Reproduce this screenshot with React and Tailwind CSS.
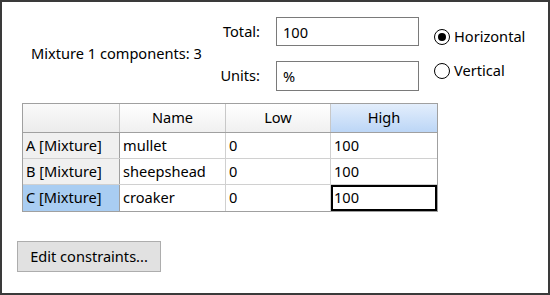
import { useState } from "react";

const rows = [
  { id: "A", name: "mullet", low: "0", high: "100" },
  { id: "B", name: "sheepshead", low: "0", high: "100" },
  { id: "C", name: "croaker", low: "0", high: "100" },
];

const App = () => {
  const [orientation, setOrientation] = useState("horizontal");

  return (
    <div
      className="w-[550px] h-[295px] bg-white border-2 border-[#3a3a3a] text-[14.6px] text-black overflow-hidden"
      style={{ fontFamily: '"Noto Sans", "Open Sans", sans-serif' }}
    >
      {/* Top controls */}
      <div className="flex pt-[15px]">
        <div className="w-[205px] pl-[29px] flex items-center">
          <span>Mixture 1 components: 3</span>
        </div>
        <div className="flex flex-col gap-[15px]">
          <div className="flex items-center">
            <span className="w-[53px] text-right">Total:</span>
            <input
              className="ml-[16px] w-[143px] h-[29px] border border-[#7a7a7a] px-[6px] outline-none"
              defaultValue="100"
            />
          </div>
          <div className="flex items-center">
            <span className="w-[53px] text-right">Units:</span>
            <input
              className="ml-[16px] w-[143px] h-[30px] border border-[#7a7a7a] px-[6px] outline-none"
              defaultValue="%"
            />
          </div>
        </div>
        <div className="flex flex-col gap-[12px] ml-[15px] pt-[9px]">
          {[
            { id: "horizontal", label: "Horizontal" },
            { id: "vertical", label: "Vertical" },
          ].map((opt) => (
            <label
              key={opt.id}
              className="flex items-center gap-[4px] h-[22px] cursor-pointer"
              onClick={() => setOrientation(opt.id)}
            >
              <span className="w-[16px] h-[16px] rounded-full border-[1.5px] border-black flex items-center justify-center">
                {orientation === opt.id && (
                  <span className="w-[8px] h-[8px] rounded-full bg-black" />
                )}
              </span>
              <span>{opt.label}</span>
            </label>
          ))}
        </div>
      </div>

      {/* Grid */}
      <div className="ml-[20px] mt-[12px] w-[416px] border border-[#a0a0a0]">
        <div className="flex h-[29px] border-b border-[#a0a0a0]">
          <div className="w-[97px] bg-gradient-to-b from-[#fafafa] to-[#ececec] border-r border-[#c8c8c8]" />
          <div className="w-[106px] flex items-center justify-center bg-gradient-to-b from-white to-[#f0f0f0] border-r border-[#c8c8c8]">
            Name
          </div>
          <div className="w-[105px] flex items-center justify-center bg-gradient-to-b from-white to-[#f0f0f0] border-r border-[#c8c8c8]">
            Low
          </div>
          <div className="flex-1 flex items-center justify-center bg-gradient-to-b from-[#e3eefc] to-[#bcd6f6]">
            High
          </div>
        </div>
        {rows.map((r, i) => {
          const selected = i === rows.length - 1;
          return (
            <div
              key={r.id}
              className={`flex h-[26px] ${i < rows.length - 1 ? "border-b border-[#d0d0d0]" : ""}`}
            >
              <div
                className={`w-[97px] flex items-center pl-[3px] border-r border-[#a0a0a0] ${
                  selected ? "bg-[#a9cdf2]" : "bg-[#f0f0f0]"
                }`}
              >
                {r.id} [Mixture]
              </div>
              <div className="w-[106px] flex items-center pl-[3px] border-r border-[#d0d0d0]">
                {r.name}
              </div>
              <div className="w-[105px] flex items-center pl-[3px] border-r border-[#d0d0d0]">
                {r.low}
              </div>
              <div
                className={`flex-1 flex items-center ${
                  selected ? "border-2 border-black pl-[1px]" : "pl-[3px]"
                }`}
              >
                {r.high}
              </div>
            </div>
          );
        })}
      </div>

      {/* Button */}
      <button className="ml-[15px] mt-[29px] w-[144px] h-[31px] bg-[#e1e1e1] border border-[#adadad]">
        Edit constraints...
      </button>
    </div>
  );
};

export default App;
